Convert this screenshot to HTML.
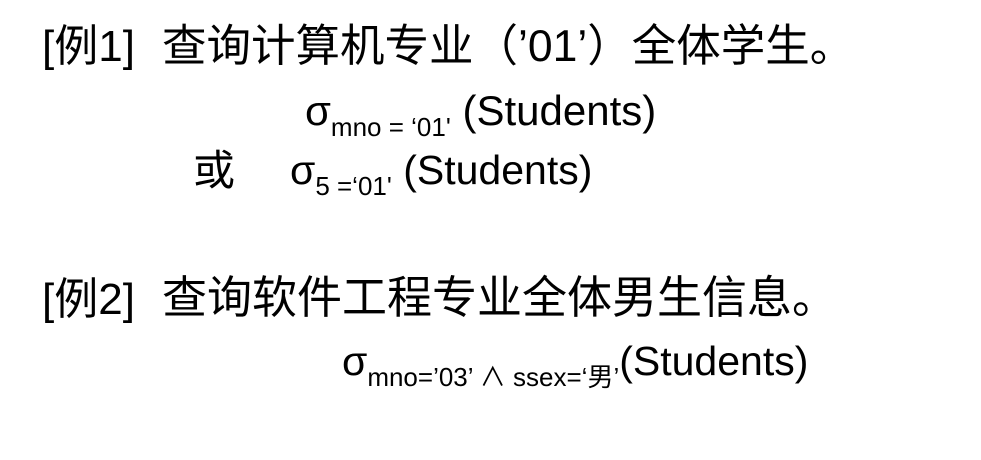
<!DOCTYPE html>
<html><head><meta charset="utf-8"><style>
body{margin:0;width:981px;height:460px;background:#fff;position:relative;overflow:hidden;font-family:"Liberation Sans","Noto Sans CJK SC",sans-serif;color:#000}
.a{position:absolute;white-space:nowrap;line-height:1}
sub{font-size:26px;vertical-align:-11px}
</style></head><body>
<div class="a" style="left:42px;top:25px;font-size:44px">[例1]</div>
<div class="a" style="left:162px;top:25px;font-size:44.5px">查询计算机专业（’01’）全体学生。</div>
<div class="a" style="left:305px;top:90px;font-size:42px">σ<sub>mno = ‘01'</sub> (Students)</div>
<div class="a" style="left:193px;top:150px;font-size:42px">或</div>
<div class="a" style="left:290px;top:150px;font-size:41px">σ<sub>5 =‘01'</sub> (Students)</div>
<div class="a" style="left:42px;top:278px;font-size:44px">[例2]</div>
<div class="a" style="left:162px;top:275px;font-size:45px">查询软件工程专业全体男生信息。</div>
<div class="a" style="left:342px;top:341px;font-size:41px">σ<sub>mno=’03’ ∧ ssex=‘男’</sub>(Students)</div>
</body></html>
